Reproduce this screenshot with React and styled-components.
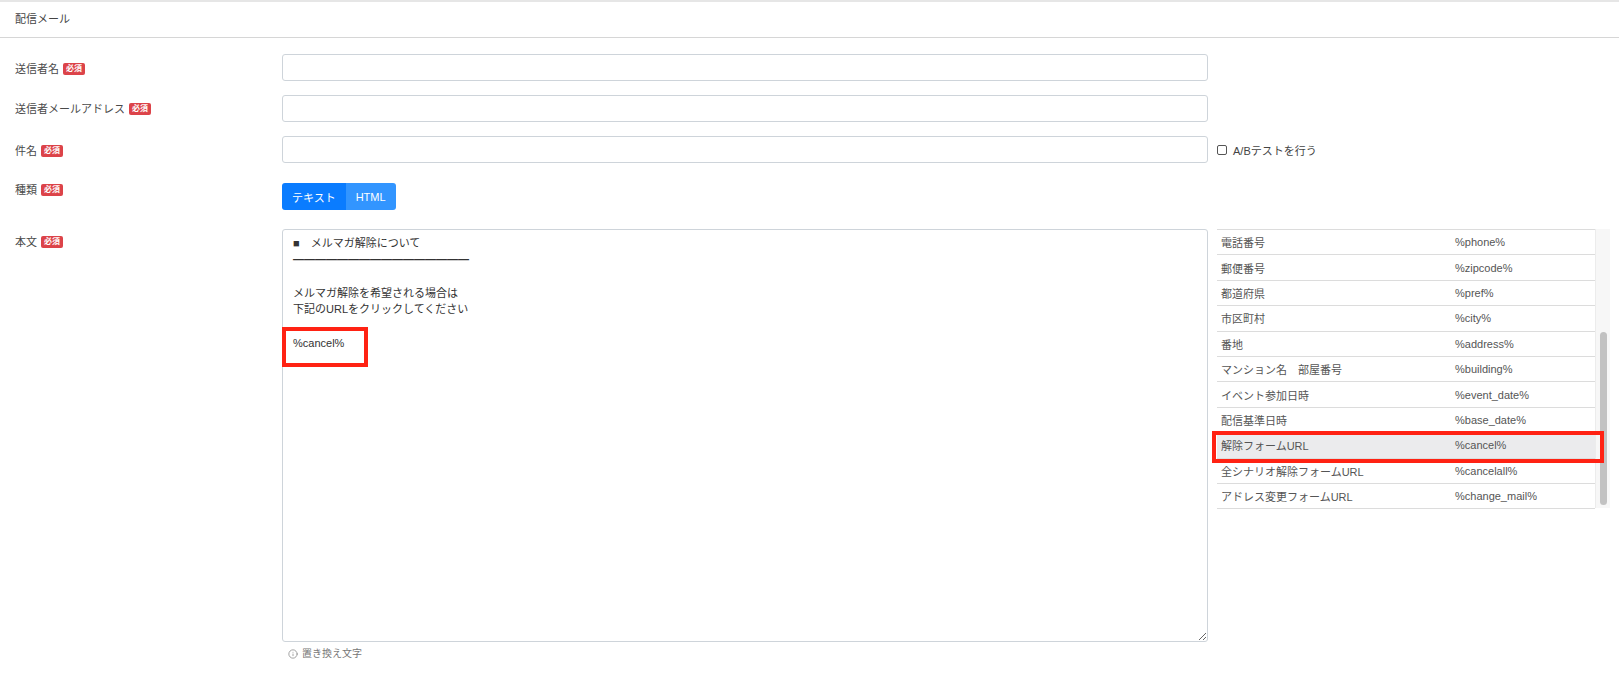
import React from 'react';
import styled, { createGlobalStyle } from 'styled-components';
import { Info } from 'lucide-react';

const GlobalStyle = createGlobalStyle`
  body {
    margin: 0;
    background: #fff;
    font-family: "Liberation Sans", "Noto Sans CJK JP", sans-serif;
    color: #495057;
  }
`;

const Card = styled.div`
  border-top: 2px solid #e6e6e6;
`;

const CardHeader = styled.div`
  height: 35px;
  line-height: 35px;
  padding: 0 15px;
  font-size: 11px;
  color: #444;
  border-bottom: 1px solid #d6d6d6;
`;

const Form = styled.div`
  padding: 16px 9px 0 15px;
`;

const Row = styled.div`
  display: grid;
  grid-template-columns: 258px 926px 1fr;
  column-gap: 9px;
  margin-bottom: ${(p) => p.$gap || 0}px;
`;

const Label = styled.div`
  font-size: 11px;
  line-height: 14px;
  color: #4a4a4a;
  padding-top: ${(p) => p.$pt || 0}px;
  display: flex;
  align-items: flex-start;
`;

const Badge = styled.span`
  display: inline-block;
  margin-left: 4px;
  margin-top: 1px;
  height: 12px;
  line-height: 12px;
  padding: 0 3px;
  border-radius: 2px;
  background: #dc4349;
  color: #fff;
  font-size: 8px;
  font-weight: bold;
`;

const TextInput = styled.input`
  box-sizing: border-box;
  display: block;
  width: 100%;
  height: 27px;
  margin: 0;
  border: 1px solid #ced4da;
  border-radius: 3px;
  background: #fff;
`;

const Side = styled.div`
  display: flex;
  align-items: ${(p) => (p.$top ? 'flex-start' : 'center')};
`;

const CheckLabel = styled.label`
  display: flex;
  align-items: center;
  gap: 6px;
  font-size: 11px;
  color: #444;
`;

const CheckBox = styled.span`
  box-sizing: border-box;
  width: 10px;
  height: 10px;
  border: 1px solid #555;
  border-radius: 2px;
  background: #fff;
`;

const ButtonGroup = styled.div`
  display: inline-flex;
  height: 27px;
  border-radius: 3px;
  overflow: hidden;
`;

const ToggleButton = styled.button`
  border: none;
  margin: 0;
  padding: 0 10px;
  font-family: inherit;
  font-size: 11px;
  color: #fff;
  background: ${(p) => (p.$active ? '#0a7cff' : '#3295ff')};
`;

const EditorWrap = styled.div`
  position: relative;
`;

const BodyArea = styled.textarea`
  box-sizing: border-box;
  display: block;
  width: 100%;
  height: 413px;
  margin: 0;
  padding: 5px 10px;
  border: 1px solid #ced4da;
  border-radius: 3px;
  font-family: "Liberation Sans", "Noto Sans CJK JP", sans-serif;
  font-size: 11px;
  line-height: 16.6px;
  color: #333;
  outline: none;
`;

const Marker = styled.div`
  position: absolute;
  box-sizing: border-box;
  border: 4px solid #ff2213;
  pointer-events: none;
`;

const Hint = styled.div`
  display: flex;
  align-items: center;
  gap: 4px;
  margin-top: 5px;
  padding-left: 6px;
  font-size: 10px;
  line-height: 14px;
  color: #777;
`;

const Panel = styled.div`
  position: relative;
  display: flex;
  width: 100%;
  height: 279px;
`;

const VarList = styled.div`
  flex: 1;
  border-top: 1px solid #dcdcdc;
`;

const VarRow = styled.div`
  box-sizing: border-box;
  display: grid;
  grid-template-columns: 234px 1fr;
  align-items: center;
  height: 25.4px;
  padding: 0 4px;
  border-bottom: 1px solid #dcdcdc;
  font-size: 11px;
  color: #555;
  background: ${(p) => (p.$selected ? '#ebebed' : '#fff')};
`;

const Track = styled.div`
  width: 15px;
  background: #f7f7f7;
  border-left: 1px solid #ececec;
  box-sizing: border-box;
  padding: 103px 0 0 4px;
`;

const Thumb = styled.div`
  width: 7px;
  height: 173px;
  border-radius: 4px;
  background: #c2c2c2;
`;

const vars = [
  ['電話番号', '%phone%'],
  ['郵便番号', '%zipcode%'],
  ['都道府県', '%pref%'],
  ['市区町村', '%city%'],
  ['番地', '%address%'],
  ['マンション名　部屋番号', '%building%'],
  ['イベント参加日時', '%event_date%'],
  ['配信基準日時', '%base_date%'],
  ['解除フォームURL', '%cancel%'],
  ['全シナリオ解除フォームURL', '%cancelall%'],
  ['アドレス変更フォームURL', '%change_mail%'],
];

const bodyText = [
  '■　メルマガ解除について',
  '━━━━━━━━━━━━━━━━',
  '',
  'メルマガ解除を希望される場合は',
  '下記のURLをクリックしてください',
  '',
  '%cancel%',
].join('\n');

const App = () => {
  return (
    <>
      <GlobalStyle />
      <Card>
        <CardHeader>配信メール</CardHeader>
        <Form>
          <Row $gap={14}>
            <Label $pt={8}>送信者名<Badge>必須</Badge></Label>
            <TextInput type="text" />
            <Side />
          </Row>
          <Row $gap={14}>
            <Label $pt={7}>送信者メールアドレス<Badge>必須</Badge></Label>
            <TextInput type="text" />
            <Side />
          </Row>
          <Row $gap={20}>
            <Label $pt={8}>件名<Badge>必須</Badge></Label>
            <TextInput type="text" />
            <Side>
              <CheckLabel>
                <CheckBox />
                A/Bテストを行う
              </CheckLabel>
            </Side>
          </Row>
          <Row $gap={19}>
            <Label $pt={0}>種類<Badge>必須</Badge></Label>
            <div>
              <ButtonGroup>
                <ToggleButton $active>テキスト</ToggleButton>
                <ToggleButton>HTML</ToggleButton>
              </ButtonGroup>
            </div>
            <Side />
          </Row>
          <Row>
            <Label $pt={6}>本文<Badge>必須</Badge></Label>
            <div>
              <EditorWrap>
                <BodyArea defaultValue={bodyText} spellCheck={false} />
                <Marker style={{ left: 0, top: 98, width: 86, height: 40 }} />
              </EditorWrap>
              <Hint>
                <Info size={10} strokeWidth={1.6} />
                置き換え文字
              </Hint>
            </div>
            <Side $top>
              <Panel>
                <VarList>
                  {vars.map(([name, tag]) => (
                    <VarRow key={tag} $selected={tag === '%cancel%'}>
                      <span>{name}</span>
                      <span>{tag}</span>
                    </VarRow>
                  ))}
                </VarList>
                <Track>
                  <Thumb />
                </Track>
                <Marker style={{ left: -5, top: 202, width: 392, height: 32 }} />
              </Panel>
            </Side>
          </Row>
        </Form>
      </Card>
    </>
  );
};

export default App;
